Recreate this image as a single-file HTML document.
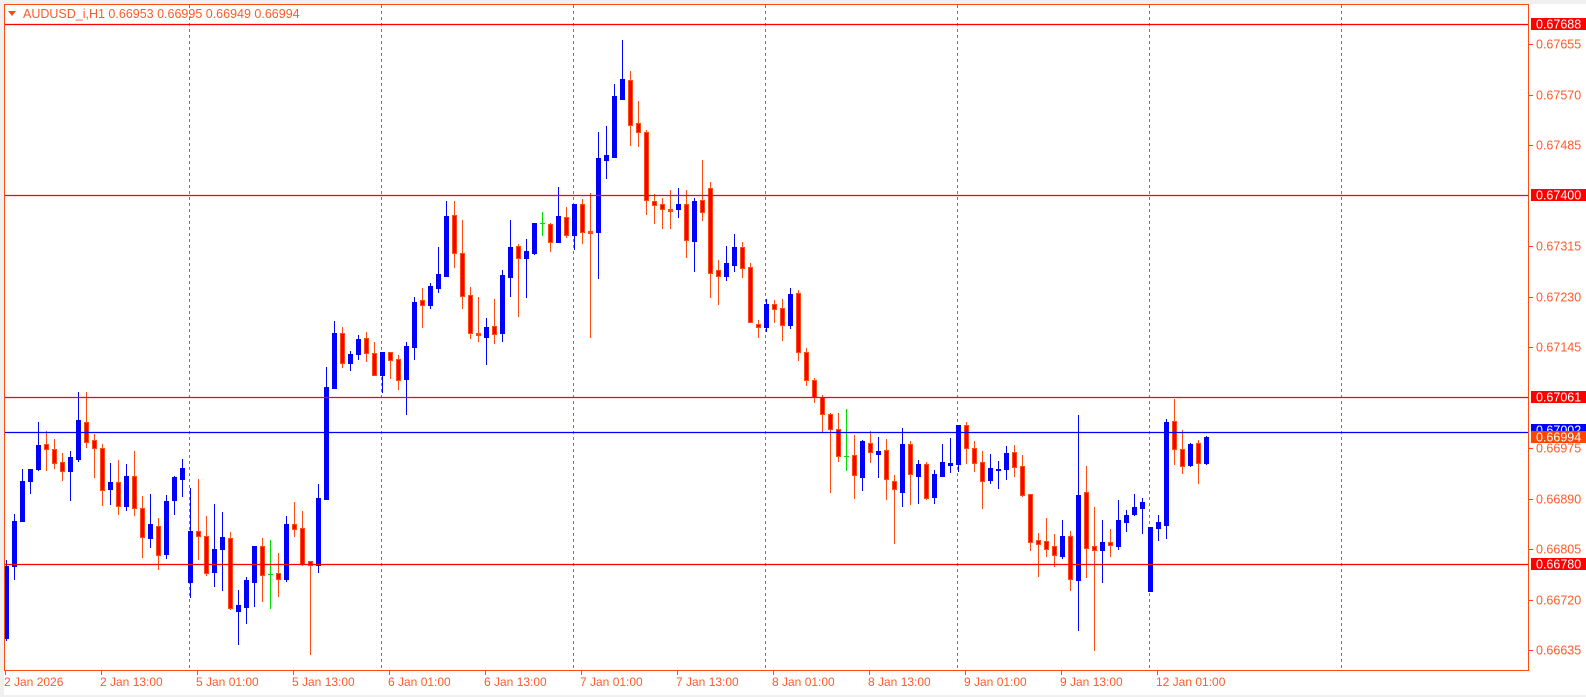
<!DOCTYPE html>
<html><head><meta charset="utf-8"><style>
html,body{margin:0;padding:0;background:#f0f0f0;}
svg{display:block;font-family:"Liberation Sans",sans-serif;}
</style></head><body>
<svg id="s" width="1586" height="697" xmlns="http://www.w3.org/2000/svg">
<rect x="4" y="4" width="1582" height="691" fill="#fff"/>
<g id="grid"></g>
<g id="cand"></g>
<g id="ov"></g>
<rect x="4.5" y="4.5" width="1524" height="666" fill="none" stroke="#ff4a10" stroke-width="1"/>
<path d="M8 11 L16 11 L12 16 Z" fill="#ff4a10"/>
<text x="23" y="18" font-size="12.5" fill="#ff5a2a">AUDUSD_i,H1  0.66953 0.66995 0.66949 0.66994</text>
<g id="ax"></g>
</svg>
<script>
var NS="http://www.w3.org/2000/svg";
function el(p,t,a,txt){var e=document.createElementNS(NS,t);for(var k in a)e.setAttribute(k,a[k]);if(txt!=null)e.textContent=txt;document.getElementById(p).appendChild(e);return e;}
[189,381,573,765,957,1149,1341].forEach(function(x){el('grid','line',{x1:x+.5,y1:5,x2:x+.5,y2:671,stroke:'#ff4a10','stroke-dasharray':'3,3','stroke-width':1});});
var C=[
['b',566,638,560,640],['b',521,566,514,579],['b',481,521,469,521],['b',469,481,469,493],['b',445,469,422,470],
['r',444,449,431,470],['r',449,463,439,468],['r',462,471,453,480],['b',457,471,451,500],['b',420,459,392,461],
['r',422,442,392,447],['r',440,448,434,477],['r',448,490,444,505],['b',482,489,463,504],['r',482,506,460,514],
['b',476,506,464,510],['r',476,508,451,515],['r',508,537,496,557],['b',524,538,494,547],['r',526,555,518,569],
['b',501,554,495,558],['b',477,500,476,514],['b',468,479,459,496],['b',531,582,488,597],['r',531,536,479,559],
['r',536,573,516,575],['b',549,572,504,586],['b',537,549,512,590],['r',538,608,532,609],['b',605,611,590,644],
['b',580,607,577,623],['b',546,582,546,606],['r',546,575,538,601],['g',574,574,540,608],['r',573,579,553,596],
['b',524,579,516,581],['r',524,529,502,536],['r',528,564,511,565],['r',561,565,561,654],['b',498,565,484,572],
['b',387,499,367,499],['b',333,388,321,388],['r',333,363,327,367],['b',354,363,351,370],['b',339,354,335,359],
['r',338,353,332,361],['r',353,375,342,375],['b',352,375,352,392],['r',352,360,352,378],['r',359,380,355,389],
['b',346,379,342,414],['b',302,347,297,359],['r',300,305,288,327],['b',286,305,283,308],['b',274,288,247,292],
['b',216,276,201,276],['r',215,253,201,267],['r',253,296,220,308],['r',295,333,287,338],['r',334,334,297,341],
['b',327,337,318,364],['r',326,334,299,343],['b',275,333,270,341],['b',247,277,220,296],['r',246,258,244,316],
['b',251,258,239,297],['b',223,253,223,254],['g',223,223,212,235],['r',224,242,223,251],['b',216,242,187,242],
['r',217,235,207,237],['b',204,235,204,249],['r',204,232,199,243],['r',232,232,193,337],['b',158,232,132,278],
['b',155,160,126,178],['b',96,157,84,157],['b',79,99,40,99],['r',80,125,71,145],['r',123,132,101,146],
['r',132,200,130,214],['r',201,205,194,223],['r',204,209,198,228],['r',210,210,190,228],['b',204,209,188,217],
['r',204,240,190,257],['b',201,241,198,271],['r',200,212,160,220],['r',188,273,182,297],['r',270,276,260,304],
['b',263,276,246,280],['b',247,265,234,271],['r',247,268,242,277],['r',267,322,263,322],['r',324,327,320,337],
['b',304,327,299,331],['r',304,309,300,322],['r',308,325,299,340],['b',294,325,288,328],['r',293,352,290,360],
['r',352,380,348,385],['r',380,397,378,402],['r',397,414,395,432],['r',414,429,413,492],['r',429,456,413,461],
['g',456,456,409,470],['r',455,475,435,498],['b',441,477,440,490],['r',443,452,431,462],['b',451,454,437,477],
['r',450,479,439,499],['r',481,489,475,543],['b',444,492,428,506],['r',444,474,441,504],['b',464,476,460,503],
['r',464,498,462,499],['b',474,497,470,503],['b',462,476,444,476],['b',463,465,438,472],['b',425,464,425,471],
['r',425,448,422,463],['r',448,463,441,471],['r',462,481,451,508],['b',468,480,454,483],['b',469,469,461,488],
['b',453,469,446,479],['r',452,467,445,476],['r',466,495,455,496],['r',494,542,494,550],['r',540,544,533,576],
['r',541,549,518,556],['r',546,555,534,566],['b',536,556,520,558],['r',536,579,531,590],['b',495,580,415,630],
['r',492,548,466,577],['r',546,550,507,650],['b',542,550,520,582],['r',542,545,529,556],['b',520,546,500,549],
['b',515,522,510,531],['b',507,514,494,515],['b',502,508,498,533],['b',527,591,527,591],['b',522,528,515,540],
['b',422,525,419,538],['r',421,449,399,464],['r',449,466,430,473],['b',444,465,443,466],['r',443,463,440,483],
['b',437,463,436,464]];
C.forEach(function(c,i){
 var x=6+8*i, t=c[0];
 var wc=t=='b'?'#0000ff':(t=='g'?'#00e000':'#ff4a10');
 el('cand','line',{x1:x+.5,y1:c[3],x2:x+.5,y2:c[4]+1,stroke:wc,'stroke-width':1});
 if(t=='g'){el('cand','line',{x1:x-2,y1:c[1]+.5,x2:x+3,y2:c[1]+.5,stroke:wc});return;}
 var h=Math.max(c[2]-c[1],1);
 if(t=='b'){el('cand','rect',{x:x-2,y:c[1],width:5,height:h+1,fill:'#0000ff'});}
 else{ if(h<=2) el('cand','rect',{x:x-2,y:c[1]-1,width:5,height:h+2,fill:'#ff4a10'});
   else el('cand','rect',{x:x-1.5,y:c[1]+.5,width:4,height:h,fill:'#ff0000',stroke:'#ff4a10','stroke-width':1});}
});
[[24,'#ff0000'],[195,'#ff0000'],[397,'#ff0000'],[564,'#ff0000'],[432,'#0000ff']].forEach(function(l){
 el('ov','line',{x1:5,y1:l[0]+.5,x2:1529,y2:l[0]+.5,stroke:l[1],'stroke-width':1.2});});
var ticks=[['0.67655',44],['0.67570',95],['0.67485',145],['0.67315',246],['0.67230',297],['0.67145',347],['0.66975',448],['0.66890',499],['0.66805',549],['0.66720',600],['0.66635',650]];
ticks.forEach(function(t){
 el('ax','line',{x1:1529,y1:t[1]+.5,x2:1533,y2:t[1]+.5,stroke:'#ff4a10'});
 el('ax','text',{x:1536,y:t[1]+4.5,'font-size':12.5,fill:'#ff5a2a'},t[0]);});
var boxes=[['0.67688',24,'#ff0000'],['0.67400',195,'#ff0000'],['0.67061',397,'#ff0000'],['0.66780',564,'#ff0000'],['0.67002',430,'#0000ff'],['0.66994',437,'#ff4500']];
boxes.forEach(function(b){
 el('ax','rect',{x:1531,y:b[1]-6,width:55,height:12,fill:b[2]});
 el('ax','text',{x:1536,y:b[1]+4.5,'font-size':12.5,fill:'#fff'},b[0]);});
var tl=['2 Jan 2026','2 Jan 13:00','5 Jan 01:00','5 Jan 13:00','6 Jan 01:00','6 Jan 13:00','7 Jan 01:00','7 Jan 13:00','8 Jan 01:00','8 Jan 13:00','9 Jan 01:00','9 Jan 13:00','12 Jan 01:00'];
tl.forEach(function(s,i){var x=5+96*i;
 el('ax','line',{x1:x+.5,y1:671,x2:x+.5,y2:675,stroke:'#ff4a10'});
 el('ax','text',{x:x-1,y:686,'font-size':12,fill:'#ff5a2a'},s);});
</script>
</body></html>
